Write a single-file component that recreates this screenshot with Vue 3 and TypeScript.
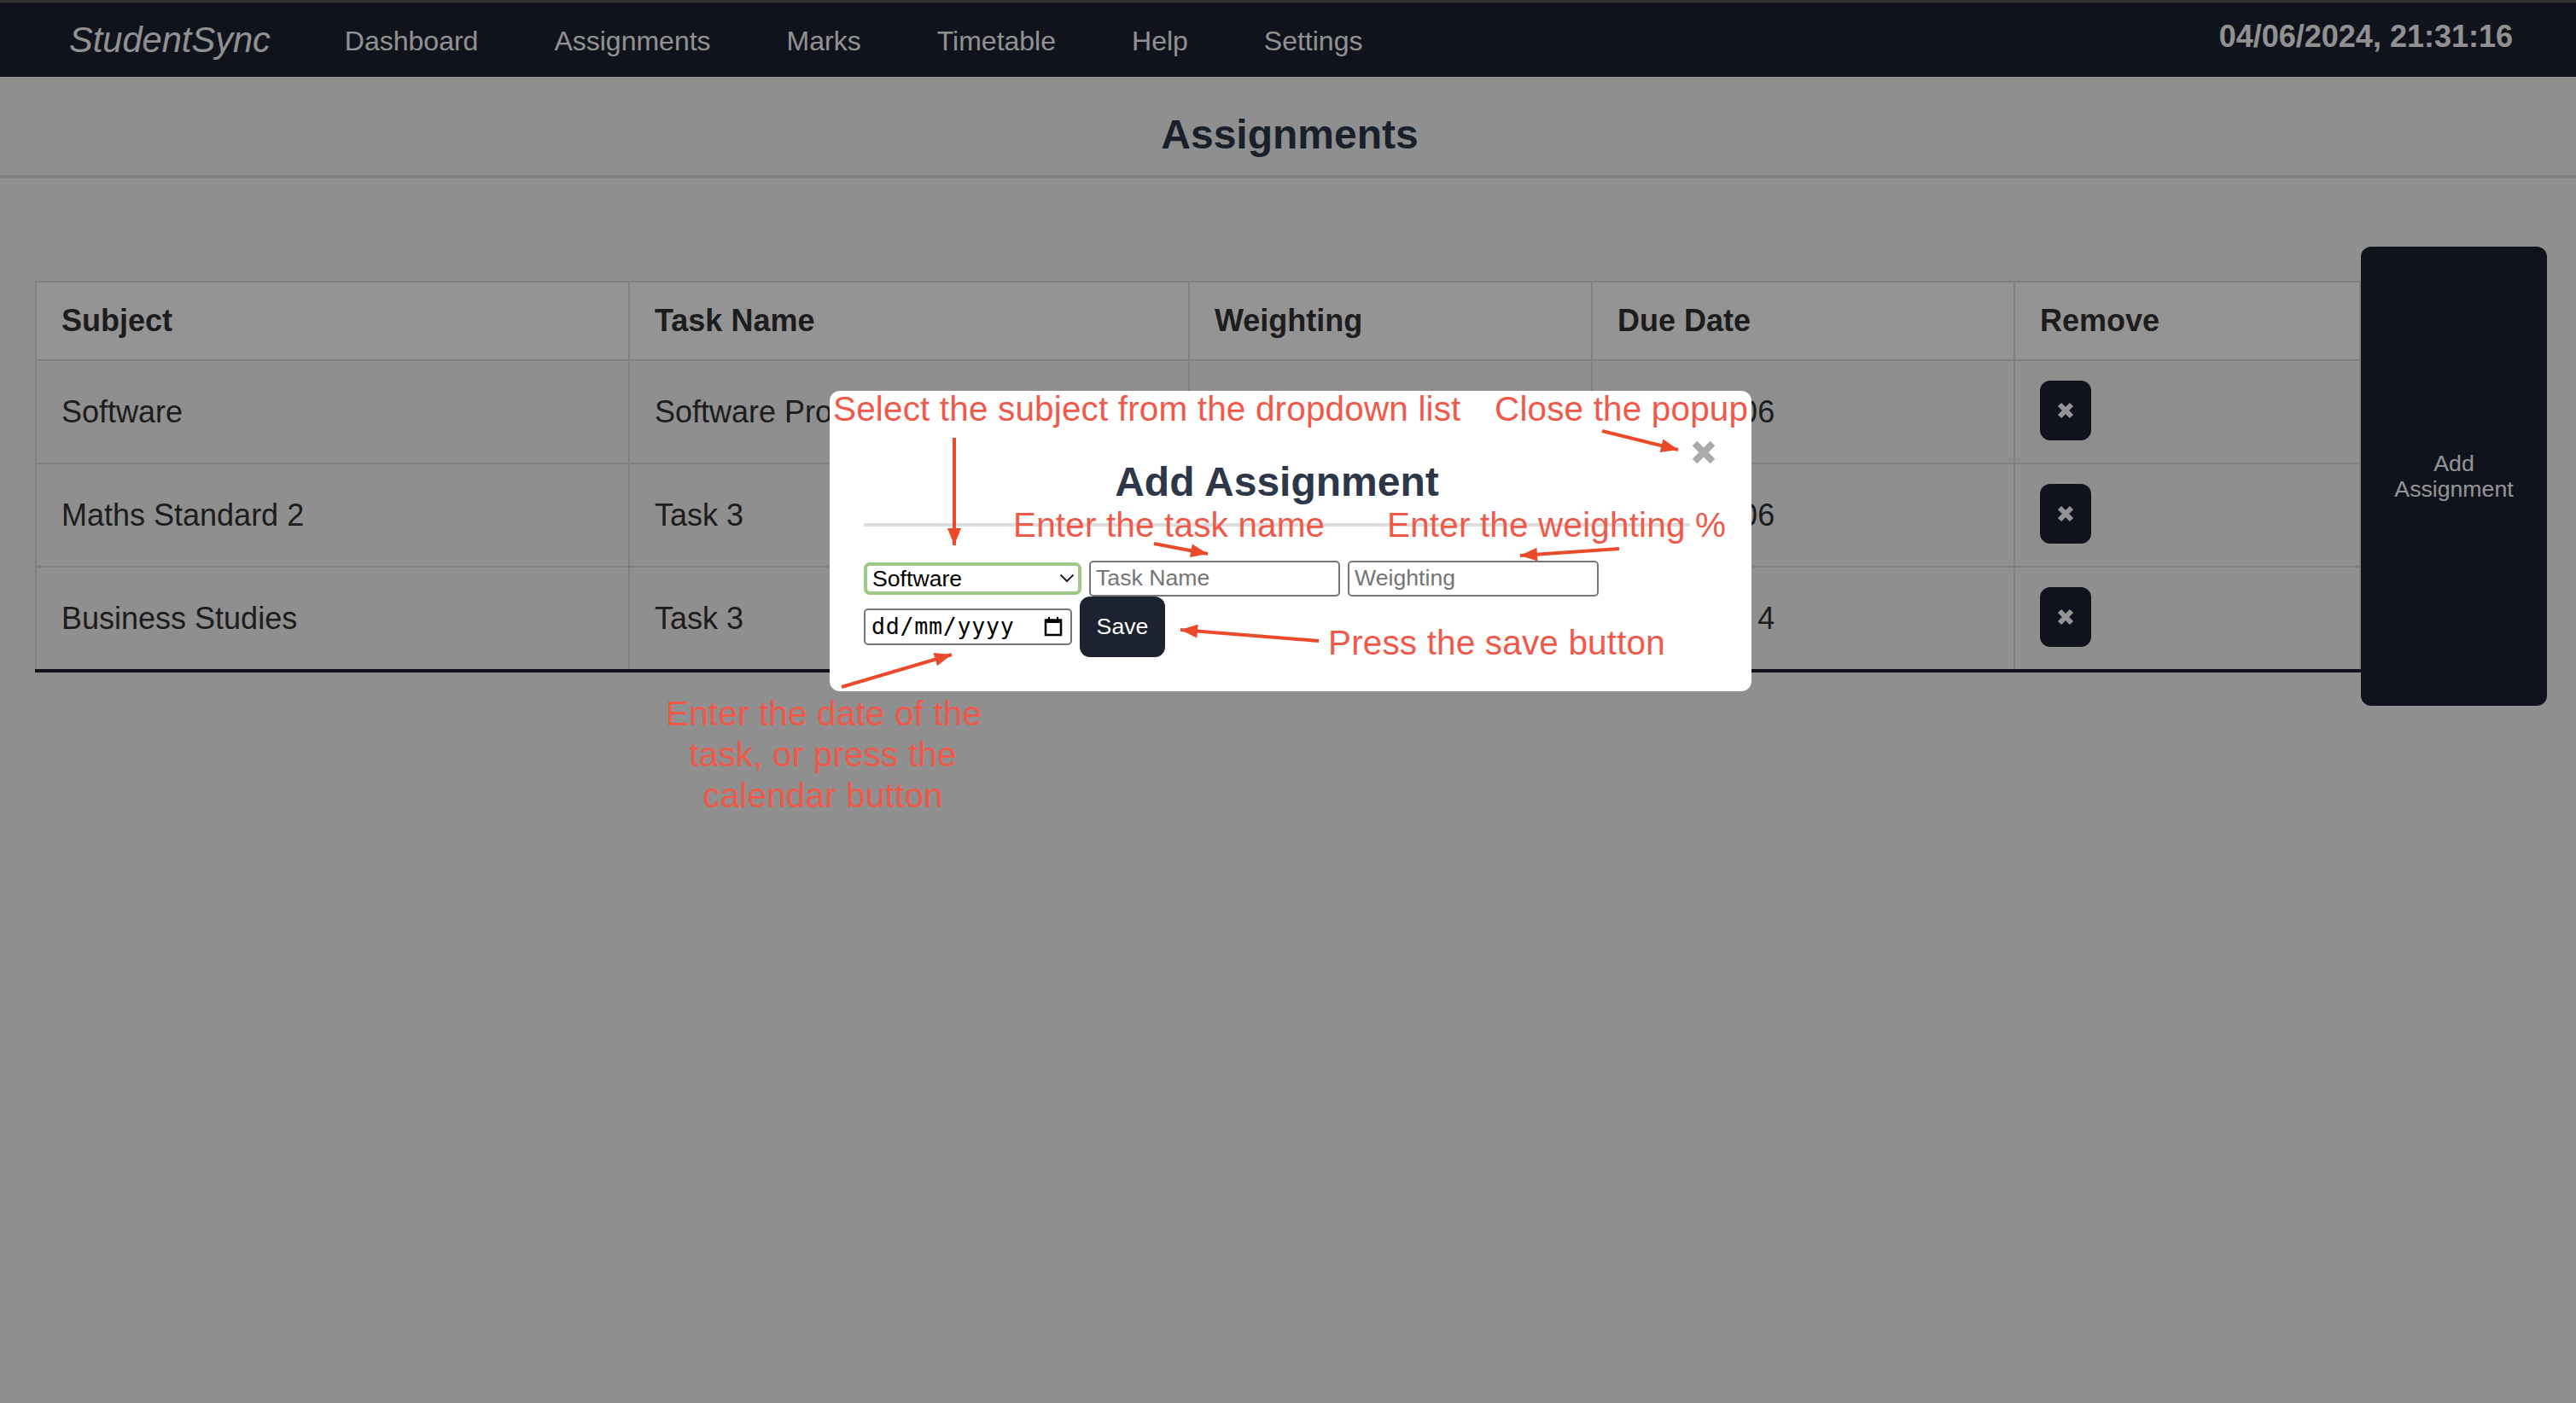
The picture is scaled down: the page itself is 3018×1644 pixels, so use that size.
<script setup lang="ts">
interface Row {
  subject: string;
  task: string;
  weighting: string;
  due: string;
}

interface Arrow {
  x1: number;
  y1: number;
  x2: number;
  y2: number;
}

const links = ['Dashboard', 'Assignments', 'Marks', 'Timetable', 'Help', 'Settings'];

const rows: Row[] = [
  { subject: 'Software', task: 'Software Project', weighting: '30%', due: '2024-06-06' },
  { subject: 'Maths Standard 2', task: 'Task 3', weighting: '25%', due: '2024-06-06' },
  { subject: 'Business Studies', task: 'Task 3', weighting: '20%', due: '2024-06-\u20074' },
];

const arrows: Arrow[] = [
  { x1: 1118, y1: 513, x2: 1118, y2: 639 },
  { x1: 1352, y1: 637, x2: 1415, y2: 649 },
  { x1: 1877, y1: 505, x2: 1966, y2: 527 },
  { x1: 1897, y1: 643, x2: 1781, y2: 651 },
  { x1: 1545, y1: 751, x2: 1383, y2: 738 },
  { x1: 986, y1: 805, x2: 1115, y2: 767 },
];

function headPoints(a: Arrow): string {
  const len = Math.hypot(a.x2 - a.x1, a.y2 - a.y1);
  const ux = (a.x2 - a.x1) / len;
  const uy = (a.y2 - a.y1) / len;
  const bx = a.x2 - ux * 20;
  const by = a.y2 - uy * 20;
  return `${a.x2},${a.y2} ${bx - uy * 8},${by + ux * 8} ${bx + uy * 8},${by - ux * 8}`;
}
</script>

<template>
  <div class="page">
    <nav class="navbar">
      <span class="brand">StudentSync</span>
      <a v-for="link in links" :key="link" class="nav-link">{{ link }}</a>
      <span class="clock">04/06/2024, 21:31:16</span>
    </nav>

    <header class="page-header">
      <h1>Assignments</h1>
    </header>

    <main class="content">
      <table class="tasks">
        <colgroup>
          <col class="col-subject" />
          <col class="col-task" />
          <col class="col-weight" />
          <col class="col-due" />
          <col />
        </colgroup>
        <thead>
          <tr>
            <th>Subject</th>
            <th>Task Name</th>
            <th>Weighting</th>
            <th>Due Date</th>
            <th>Remove</th>
          </tr>
        </thead>
        <tbody>
          <tr v-for="row in rows" :key="row.subject">
            <td>{{ row.subject }}</td>
            <td>{{ row.task }}</td>
            <td>{{ row.weighting }}</td>
            <td>{{ row.due }}</td>
            <td>
              <button class="remove" type="button" aria-label="Remove">
                <svg width="20" height="20" viewBox="0 0 20 20">
                  <path d="M3 3l14 14M17 3L3 17" stroke="currentColor" stroke-width="6" fill="none" />
                </svg>
              </button>
            </td>
          </tr>
        </tbody>
      </table>
      <button class="add" type="button">Add Assignment</button>
    </main>

    <div class="overlay"></div>

    <div class="modal">
      <button class="close" type="button" aria-label="Close">
        <svg width="28" height="28" viewBox="0 0 28 28">
          <path d="M3.5 3.5l21 21M24.5 3.5l-21 21" stroke="currentColor" stroke-width="8" fill="none" />
        </svg>
      </button>
      <h2>Add Assignment</h2>
      <hr />
      <form class="form" @submit.prevent>
        <div class="select-wrap">
          <select>
            <option>Software</option>
          </select>
          <svg class="chevron" width="18" height="11" viewBox="0 0 18 11">
            <path d="M1.5 1.5L9 9l7.5-7.5" stroke="#222" stroke-width="2" fill="none" />
          </svg>
        </div>
        <input class="field" type="text" placeholder="Task Name" />
        <input class="field" type="text" placeholder="Weighting" />
        <div class="date-field">
          <span>dd/mm/yyyy</span>
          <svg width="22" height="24" viewBox="0 0 22 24">
            <path d="M2 4.5h18v17.5H2z" stroke="#000" stroke-width="2.5" fill="none" />
            <path d="M2 6.5h18" stroke="#000" stroke-width="3" fill="none" />
            <path d="M6 1v3M16 1v3" stroke="#000" stroke-width="2" fill="none" />
          </svg>
        </div>
        <button class="save" type="submit">Save</button>
      </form>
    </div>

    <svg class="arrows" width="3018" height="1644" viewBox="0 0 3018 1644">
      <g v-for="(a, i) in arrows" :key="i">
        <line :x1="a.x1" :y1="a.y1" :x2="a.x2" :y2="a.y2" stroke="#ea4a2a" stroke-width="4" />
        <polygon :points="headPoints(a)" fill="#ea4a2a" />
      </g>
    </svg>

    <span class="note note-subject">Select the subject from the dropdown list</span>
    <span class="note note-close">Close the popup</span>
    <span class="note note-task">Enter the task name</span>
    <span class="note note-weight">Enter the weighting %</span>
    <span class="note note-save">Press the save button</span>
    <span class="note note-date">Enter the date of the<br />task, or press the<br />calendar button</span>
  </div>
</template>

<style>
body {
  background: #fff;
}
</style>

<style scoped>
.page {
  position: relative;
  width: 3018px;
  height: 1644px;
  overflow: hidden;
  background: #f6f6f6;
  font-family: "Liberation Sans", Arial, sans-serif;
  color: #333;
}

.navbar {
  display: flex;
  height: 90px;
  box-sizing: border-box;
  border-top: 3px solid #555;
  padding: 0 74px 0 81px;
  background: #1c2230;
  color: #fafafa;
  line-height: 1;
}
.brand {
  margin: 23px 87px 0 0;
  font-size: 41.6px;
  font-style: italic;
}
.nav-link {
  margin: 29px 89px 0 0;
  font-size: 32px;
}
.clock {
  margin: 22px 0 0 auto;
  font-size: 36px;
  font-weight: 700;
}

.page-header {
  height: 119px;
  box-sizing: border-box;
  border-bottom: 4px solid #dcdcdc;
  padding: 41px 0 0 4px;
  text-align: center;
}
.page-header h1 {
  margin: 0;
  font-size: 48px;
  line-height: 54px;
  color: #2d3748;
}

.content {
  display: flex;
  align-items: flex-start;
  padding: 80px 34px 0 41px;
}

.tasks {
  flex: 1;
  margin-top: 40px;
  border-collapse: collapse;
  table-layout: fixed;
  font-size: 36px;
}
.col-subject { width: 695px; }
.col-task { width: 656px; }
.col-weight { width: 472px; }
.col-due { width: 495px; }

.tasks th,
.tasks td {
  border: 2px solid #dcdcdc;
  padding: 0 29px;
  text-align: left;
}
.tasks th {
  height: 90px;
  background: #fff;
  color: #333;
}
.tasks td {
  height: 119px;
}
.tasks tbody tr:last-child td {
  border-bottom: 4px solid #1c2230;
}

.remove {
  display: flex;
  align-items: center;
  justify-content: center;
  width: 60px;
  height: 70px;
  margin-bottom: 4px;
  border: 0;
  border-radius: 12px;
  padding: 0;
  background: #1c2230;
  color: #fff;
}

.add {
  flex: none;
  width: 218px;
  height: 538px;
  border: 0;
  border-radius: 12px;
  padding: 0 20px;
  background: #1c2230;
  color: #fff;
  font: 26.67px/30px "Liberation Sans", Arial, sans-serif;
}

.overlay {
  position: absolute;
  inset: 0;
  background: rgba(0, 0, 0, 0.42);
}

.modal {
  position: absolute;
  left: 972px;
  top: 458px;
  width: 1080px;
  height: 352px;
  box-sizing: border-box;
  border-radius: 12px;
  padding: 80px 72px 0 40px;
  background: #fff;
}
.modal h2 {
  margin: 0;
  font-size: 48px;
  line-height: 54px;
  text-align: center;
  color: #2d3748;
}
.modal hr {
  height: 4px;
  margin: 21px 0 40px;
  border: 0;
  background: #ddd;
}

.close {
  position: absolute;
  top: 58px;
  right: 42px;
  display: flex;
  border: 0;
  padding: 0;
  background: none;
  color: #aaa;
}

.form {
  display: flex;
  flex-wrap: wrap;
  align-items: center;
  column-gap: 9px;
  font-size: 26.67px;
}

.select-wrap {
  position: relative;
  width: 255px;
  height: 38px;
}
.select-wrap select {
  width: 100%;
  height: 100%;
  box-sizing: border-box;
  appearance: none;
  border: 4px solid #9cc888;
  border-radius: 7px;
  padding: 0 0 2px 6px;
  background: #fff;
  color: #000;
  font: 26.67px "Liberation Sans", Arial, sans-serif;
  outline: none;
}
.chevron {
  position: absolute;
  top: 13px;
  right: 8px;
}

.field {
  width: 294px;
  height: 42px;
  box-sizing: border-box;
  border: 2px solid #767676;
  border-radius: 5px;
  padding: 0 6px 2px;
  font: 26.67px "Liberation Sans", Arial, sans-serif;
}
.field::placeholder {
  color: #757575;
}

.date-field {
  display: flex;
  align-items: center;
  justify-content: space-between;
  width: 244px;
  height: 43px;
  box-sizing: border-box;
  border: 2px solid #767676;
  border-radius: 5px;
  padding: 0 9px 2px 7px;
  color: #000;
  font-family: "DejaVu Sans Mono", monospace;
  font-size: 26.67px;
  letter-spacing: 0.7px;
}

.save {
  width: 100px;
  height: 71px;
  border: 0;
  border-radius: 12px;
  background: #1c2230;
  color: #fff;
  font: 26.67px "Liberation Sans", Arial, sans-serif;
}

.arrows {
  position: absolute;
  inset: 0;
  pointer-events: none;
}

.note {
  position: absolute;
  color: #f0594a;
  font-size: 40.5px;
  letter-spacing: 0.15px;
  line-height: 48px;
  white-space: nowrap;
}
.note-subject { left: 976px; top: 455px; }
.note-close { left: 1751px; top: 455px; }
.note-task { left: 1187px; top: 591px; }
.note-weight { left: 1625px; top: 591px; }
.note-save { left: 1556px; top: 729px; }
.note-date { left: 780px; top: 812px; width: 368px; text-align: center; }
</style>
